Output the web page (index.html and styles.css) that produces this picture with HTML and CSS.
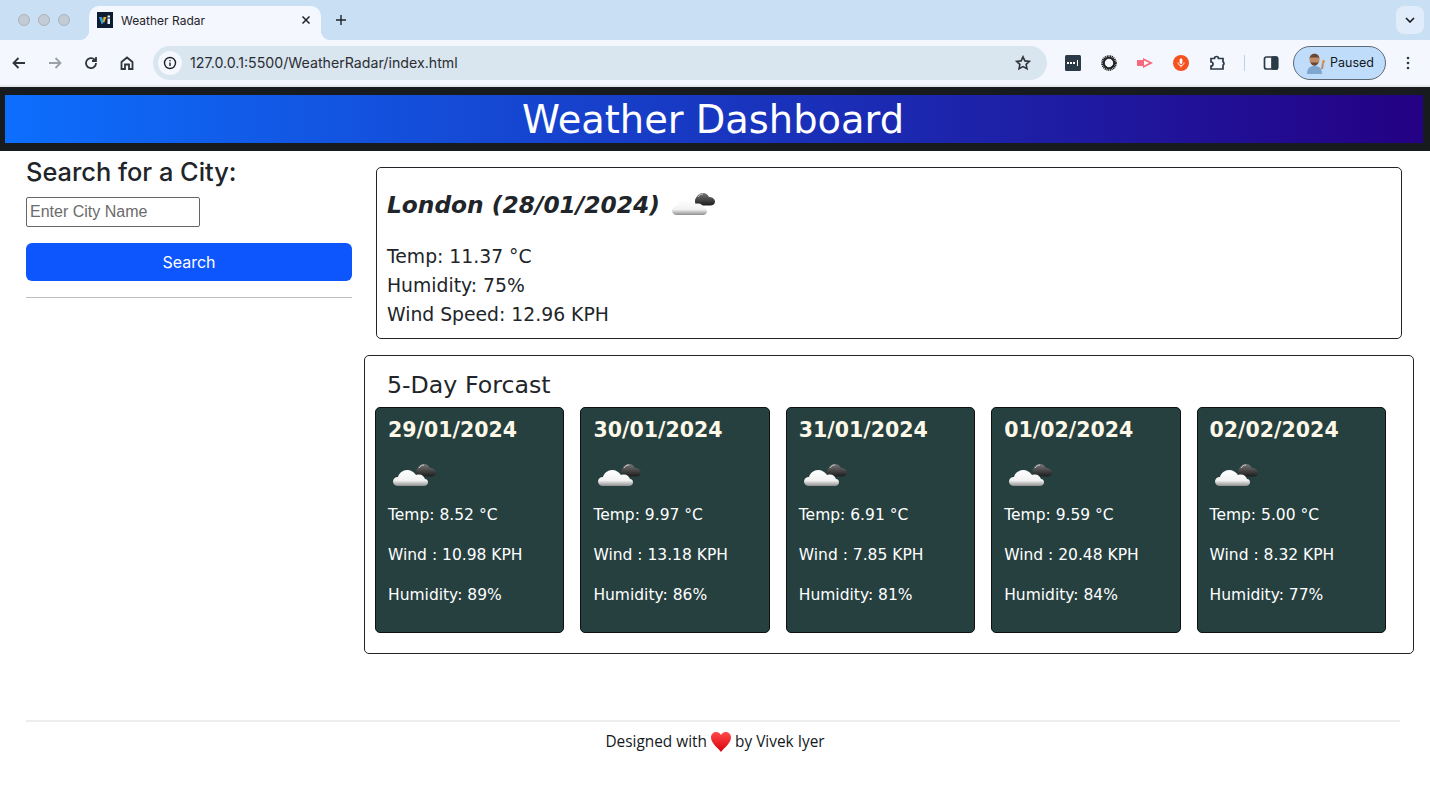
FILE: index.html
```html
<!DOCTYPE html>
<html lang="en">

<head>
    <meta charset="UTF-8">
    <meta name="viewport" content="width=device-width, initial-scale=1.0">
    <title>Weather Radar</title>
    <link rel="stylesheet" href="styles.css">
</head>

<body>
    <svg class="sprites" width="0" height="0">
        <defs>
            <linearGradient id="cloud-white" x1="0" y1="0" x2="0" y2="1">
                <stop offset="0" stop-color="#ffffff"/>
                <stop offset="0.65" stop-color="#f2f2f2"/>
                <stop offset="1" stop-color="#8f8f8f"/>
            </linearGradient>
            <linearGradient id="cloud-dark" x1="0" y1="0" x2="0" y2="1">
                <stop offset="0" stop-color="#777"/>
                <stop offset="1" stop-color="#1c1c1c"/>
            </linearGradient>
            <linearGradient id="heart-red" x1="0" y1="0" x2="0" y2="1">
                <stop offset="0" stop-color="#ff4a4a"/>
                <stop offset="1" stop-color="#d8000c"/>
            </linearGradient>
            <symbol id="clouds" viewBox="0 0 44 26">
                <path d="M24 7c1-3 4-5 7-5 3 0 5 2 6 4 3 0 6 2 6 4.500 0 2.500-2 4-5 4H27c-3 0-4-2-4-4 0-1.500 0-2.500 1-3.500z" fill="url(#cloud-dark)"/>
                <path d="M26 6c1-2 3-3 5-3" fill="none" stroke="#cfcfcf" stroke-width="1"/>
                <path d="M5 24c-3 0-5-2-5-4.500C0 17 2 15 5 15c1-4 5-7 9-7 4 0 7 2 9 5 1-.5 2-.5 3-.5 3 0 5 2 6 4.500 2 0 3 1.500 3 3.500s-2 3.500-4 3.500z" fill="url(#cloud-white)"/>
            </symbol>
        </defs>
    </svg>

    <div class="tab-strip">
        <div class="traffic">
            <span class="light"></span>
            <span class="light"></span>
            <span class="light"></span>
        </div>
        <div class="tab">
            <svg class="favicon" viewBox="0 0 16 16">
                <rect width="16" height="16" fill="#0d1b33"/>
                <path d="M2 5h3l1.500 4.500L5.500 12h-1z" fill="#2f9fe0"/>
                <path d="M9.500 5H6.500l-.5 4.500 1 1.500z" fill="#f2b01e"/>
                <rect x="10.500" y="6.500" width="2.500" height="5.500" fill="#e8eef5"/>
                <rect x="10.500" y="3.500" width="2.500" height="2" fill="#e8eef5"/>
            </svg>
            <span class="tab-title">Weather Radar</span>
            <svg class="tab-close" viewBox="0 0 10 10">
                <path d="M1.500 1.500l7 7M8.500 1.500l-7 7"/>
            </svg>
        </div>
        <svg class="new-tab" viewBox="0 0 12 12">
            <path d="M6 1v10M1 6h10"/>
        </svg>
        <div class="tab-menu">
            <svg viewBox="0 0 10 6">
                <path d="M1 1l4 4 4-4"/>
            </svg>
        </div>
    </div>

    <div class="toolbar">
        <svg class="nav-icon" viewBox="0 0 16 16"><path d="M14 8H3M7.500 3L2.500 8l5 5"/></svg>
        <svg class="nav-icon off" viewBox="0 0 16 16"><path d="M2 8h11M8.500 3l5 5-5 5"/></svg>
        <svg class="nav-icon" viewBox="0 0 16 16"><path d="M13 8a5 5 0 1 1-1.500-3.500L13 6M13 2v4H9"/></svg>
        <svg class="nav-icon" viewBox="0 0 16 16"><path d="M2.500 7L8 2.500 13.500 7v7H10V9.500H6V14H2.500z"/></svg>
        <div class="omnibox">
            <span class="site-info">
                <svg viewBox="0 0 14 14">
                    <circle cx="7" cy="7" r="5.500"/>
                    <path d="M7 6.500V10M7 4v1.200"/>
                </svg>
            </span>
            <span class="url">127.0.0.1:5500/WeatherRadar/index.html</span>
            <svg class="star" viewBox="0 0 16 16"><path d="M8 1.800l1.900 4.100 4.500.5-3.300 3 .9 4.400L8 11.600l-4 2.200.9-4.400-3.300-3 4.500-.5z"/></svg>
        </div>
        <div class="extensions">
            <svg class="ext" viewBox="0 0 16 16">
                <rect width="16" height="16" rx="1.500" fill="#2b3a47"/>
                <path d="M2 7h2v2H2zM5 7h2v2H5zM8 7h2v2H8zM12 5h1v6h-1z" fill="#fff"/>
            </svg>
            <svg class="ext" viewBox="0 0 16 16">
                <circle cx="8" cy="8" r="6" fill="none" stroke="#1c1c1c" stroke-width="3.600" stroke-dasharray="1 .5"/>
                <circle cx="8" cy="8" r="5.200" fill="none" stroke="#1c1c1c" stroke-width="1.600"/>
            </svg>
            <svg class="ext" viewBox="0 0 16 16">
                <path d="M0 5h6V3l10 5-10 5v-2H0z" fill="#f76a7d"/>
                <path d="M7 5.500L12 8l-5 2.500z" fill="#fff"/>
            </svg>
            <svg class="ext" viewBox="0 0 16 16">
                <circle cx="8" cy="8" r="8" fill="#f4511e"/>
                <rect x="6.600" y="3.500" width="2.800" height="5.500" rx="1.400" fill="#fff"/>
                <path d="M5 7.500c0 4 6 4 6 0M8 10.500v2" fill="none" stroke="#fff" stroke-width=".9"/>
            </svg>
            <svg class="ext line" viewBox="0 0 16 16">
                <path d="M2 3.500h3.500a2 2 0 0 1 4 0H14v3.300a2 2 0 0 1 0 3.400V14H2v-3a2 2 0 0 0 0-4z"/>
            </svg>
            <span class="toolbar-sep"></span>
            <svg class="ext line" viewBox="0 0 16 16">
                <rect x="1.500" y="2" width="13" height="12" rx="2"/>
                <rect x="9" y="2" width="5.500" height="12" rx="1" class="fill"/>
            </svg>
            <div class="profile">
                <svg viewBox="0 0 20 22">
                    <path d="M1 22c0-6 3-8 7.500-8s7.500 2 7.500 8z" fill="#7fa6cf"/>
                    <circle cx="8.500" cy="8" r="5" fill="#c08a66"/>
                    <path d="M3.500 7c0-7 10-7 10 0l-1-1.500h-8z" fill="#6b4630"/>
                    <path d="M4.500 10c1 5 7 5 8 0l-1 .5h-6z" fill="#6b4630"/>
                    <path d="M16 17l1-6" stroke="#c08a66" stroke-width="2"/>
                    <circle cx="17.500" cy="9.500" r="1.500" fill="#e0912f"/>
                </svg>
                <span>Paused</span>
            </div>
            <svg class="kebab" viewBox="0 0 4 16">
                <circle cx="2" cy="3" r="1.300"/>
                <circle cx="2" cy="8" r="1.300"/>
                <circle cx="2" cy="13" r="1.300"/>
            </svg>
        </div>
    </div>

    <header class="page-header">
        <h1>Weather Dashboard</h1>
    </header>

    <div class="content">
        <aside class="sidebar">
            <h2>Search for a City:</h2>
            <input class="city-input" type="text" placeholder="Enter City Name">
            <button class="search-btn" type="button">Search</button>
            <hr class="side-rule">
        </aside>

        <main class="weather">
            <section class="today">
                <h3>London (28/01/2024) <svg class="today-icon"><use href="#clouds"/></svg></h3>
                <p>Temp: 11.37 °C</p>
                <p>Humidity: 75%</p>
                <p>Wind Speed: 12.96 KPH</p>
            </section>

            <section class="forecast">
                <h4>5-Day Forcast</h4>
                <div class="cards">
                    <div class="card">
                        <h5>29/01/2024</h5>
                        <svg class="card-icon"><use href="#clouds"/></svg>
                        <p>Temp: 8.52 °C</p>
                        <p>Wind : 10.98 KPH</p>
                        <p>Humidity: 89%</p>
                    </div>
                    <div class="card">
                        <h5>30/01/2024</h5>
                        <svg class="card-icon"><use href="#clouds"/></svg>
                        <p>Temp: 9.97 °C</p>
                        <p>Wind : 13.18 KPH</p>
                        <p>Humidity: 86%</p>
                    </div>
                    <div class="card">
                        <h5>31/01/2024</h5>
                        <svg class="card-icon"><use href="#clouds"/></svg>
                        <p>Temp: 6.91 °C</p>
                        <p>Wind : 7.85 KPH</p>
                        <p>Humidity: 81%</p>
                    </div>
                    <div class="card">
                        <h5>01/02/2024</h5>
                        <svg class="card-icon"><use href="#clouds"/></svg>
                        <p>Temp: 9.59 °C</p>
                        <p>Wind : 20.48 KPH</p>
                        <p>Humidity: 84%</p>
                    </div>
                    <div class="card">
                        <h5>02/02/2024</h5>
                        <svg class="card-icon"><use href="#clouds"/></svg>
                        <p>Temp: 5.00 °C</p>
                        <p>Wind : 8.32 KPH</p>
                        <p>Humidity: 77%</p>
                    </div>
                </div>
            </section>
        </main>
    </div>

    <footer class="page-footer">
        <hr class="foot-rule">
        <p>Designed with <svg class="heart" viewBox="0 0 20 20"><path d="M10 20C6.500 15.500 0 11 0 5.500 0 2 2.500 0 5.300 0 7.300 0 9 1 10 3c1-2 2.700-3 4.700-3C17.500 0 20 2 20 5.500c0 5.500-6.500 10-10 14.500z" fill="url(#heart-red)"/></svg> by Vivek Iyer</p>
    </footer>
</body>

</html>
```

FILE: styles.css
```css
* {
    box-sizing: border-box;
}

body {
    margin: 0;
    font-family: "DejaVu Sans", sans-serif;
    color: #212529;
    background-color: #fff;
    height: 786px;
    overflow: hidden;
}

.sprites {
    display: block;
    height: 0;
}

/* browser chrome */
.tab-strip {
    display: flex;
    align-items: flex-end;
    height: 40px;
    background-color: #c9dff3;
    padding-left: 18px;
}

.traffic {
    display: flex;
    gap: 8px;
    align-self: center;
    margin-right: 19px;
}

.light {
    width: 12px;
    height: 12px;
    border-radius: 50%;
    background-color: #c3ccd5;
    border: 1px solid #a9b3bc;
}

.tab {
    position: relative;
    display: flex;
    align-items: center;
    width: 232px;
    height: 34px;
    padding: 0 10px 6px 8px;
    background-color: #f4f7fe;
    border-radius: 10px 10px 0 0;
}

.tab::before,
.tab::after {
    content: "";
    position: absolute;
    bottom: 0;
    width: 10px;
    height: 10px;
}

.tab::before {
    left: -10px;
    background: radial-gradient(circle at 0 0, #c9dff3 10px, #f4f7fe 10.500px);
}

.tab::after {
    right: -10px;
    background: radial-gradient(circle at 100% 0, #c9dff3 10px, #f4f7fe 10.500px);
}

.favicon {
    width: 16px;
    height: 16px;
    margin-right: 8px;
}

.tab-title {
    flex: 1;
    font: 12px "Inter", sans-serif;
    color: #1f2328;
}

.tab-close {
    width: 10px;
    height: 10px;
    fill: none;
    stroke: #1f2328;
    stroke-width: 1.500;
}

.new-tab {
    width: 12px;
    height: 12px;
    margin: 0 0 14px 14px;
    fill: none;
    stroke: #1f2328;
    stroke-width: 1.400;
}

.tab-menu {
    display: flex;
    align-items: center;
    justify-content: center;
    width: 28px;
    height: 28px;
    margin: 0 6px 6px auto;
    border-radius: 8px;
    background-color: #e0ecfa;
}

.tab-menu svg {
    width: 10px;
    height: 6px;
    fill: none;
    stroke: #14181c;
    stroke-width: 1.600;
}

.toolbar {
    display: flex;
    align-items: center;
    height: 47px;
    padding: 0 12px 0 11px;
    background-color: #f4f7fe;
    border-bottom: 2px solid #e6e9ee;
}

.nav-icon {
    width: 16px;
    height: 16px;
    margin-right: 20px;
    fill: none;
    stroke: #2f353b;
    stroke-width: 1.800;
}

.nav-icon.off {
    stroke: #9aa0a6;
}

.nav-icon:nth-of-type(4) {
    margin-right: 18px;
}

.omnibox {
    display: flex;
    align-items: center;
    width: 894px;
    height: 34px;
    padding: 0 16px 0 5px;
    border-radius: 17px;
    background-color: #d9e5ef;
}

.site-info {
    display: flex;
    align-items: center;
    justify-content: center;
    width: 24px;
    height: 24px;
    margin-right: 8px;
    border-radius: 50%;
    background-color: #f4f7fe;
}

.site-info svg {
    width: 14px;
    height: 14px;
    fill: none;
    stroke: #1f2328;
    stroke-width: 1.400;
}

.url {
    flex: 1;
    font: 14.200px "Inter", sans-serif;
    color: #2a2e33;
}

.star {
    width: 16px;
    height: 16px;
    fill: none;
    stroke: #2f353b;
    stroke-width: 1.600;
}

.extensions {
    display: flex;
    align-items: center;
    margin-left: 18px;
}

.ext {
    width: 16px;
    height: 16px;
    margin-right: 20px;
}

.line {
    fill: none;
    stroke: #2b3a47;
    stroke-width: 1.700;
}

.line .fill {
    fill: #2b3a47;
}

.toolbar-sep {
    width: 1px;
    height: 16px;
    margin: 0 18px 0 -1px;
    background-color: #b5d3ee;
}

.profile {
    display: flex;
    align-items: center;
    gap: 4px;
    width: 93px;
    height: 34px;
    margin-left: -6px;
    padding-left: 12px;
    border: 1px solid #5f6b76;
    border-radius: 17px;
    background-color: #bfdcfb;
    font: 12.500px "Inter", sans-serif;
    color: #14181c;
}

.profile svg {
    width: 20px;
    height: 22px;
}

.kebab {
    width: 4px;
    height: 16px;
    margin-left: 20px;
    fill: #2b3a47;
}

/* page */
.page-header {
    background-color: #181b1e;
    padding: 8px 7px 8px 5px;
}

.page-header h1 {
    margin: 0;
    height: 48px;
    padding-right: 2px;
    line-height: 50px;
    text-align: center;
    font-size: 38.400px;
    font-weight: 400;
    color: #fff;
    background: linear-gradient(to right, #0d6efd, #240084);
}

.content {
    display: flex;
}

.sidebar {
    display: flex;
    flex-direction: column;
    align-items: flex-start;
    width: 326px;
    margin-left: 26px;
    padding-top: 6px;
}

.sidebar h2 {
    margin: 0 0 10px;
    font: 500 25.400px/30px "Inter", sans-serif;
    color: #212529;
}

.city-input {
    width: 174px;
    height: 30px;
    padding: 0 3px;
    border: 1px solid #666;
    border-radius: 2px;
    font: 16px "Liberation Sans", sans-serif;
}

.city-input::placeholder {
    color: #6b6b6b;
}

.search-btn {
    width: 100%;
    height: 38px;
    margin-top: 16px;
    border: none;
    border-radius: 6px;
    background-color: #0d56fd;
    color: #fff;
    font: 16px "Inter", sans-serif;
}

.side-rule {
    width: 100%;
    margin: 16px 0 0;
    border: none;
    border-top: 1px solid #bdbdbd;
}

.weather {
    margin-left: 12px;
    width: 1050px;
}

.today {
    width: 1026px;
    height: 172px;
    margin: 16px 0 16px 12px;
    padding: 10px;
    border: 1px solid #212529;
    border-radius: 5px;
    font-size: 18.800px;
}

.today h3 {
    display: flex;
    align-items: center;
    gap: 12px;
    margin: 0 0 12px;
    height: 52px;
    font-size: 23.300px;
    font-style: italic;
    font-weight: 700;
}

.today-icon {
    width: 44px;
    height: 26px;
}

.today p {
    margin: 0;
    line-height: 29px;
}

.forecast {
    height: 299px;
    padding: 0 10px;
    border: 1px solid #212529;
    border-radius: 5px;
}

.forecast h4 {
    margin: 0;
    padding: 15px 0 0 12px;
    height: 51px;
    font-size: 23.700px;
    font-weight: 400;
}

.cards {
    display: flex;
    gap: 16px;
}

.card {
    width: 189.400px;
    height: 226px;
    padding: 10px 12px;
    border: 1px solid #111;
    border-radius: 5px;
    background-color: #264040;
    color: #fff;
    font-size: 15.500px;
}

.card h5 {
    margin: 0 0 20px;
    font-size: 20.500px;
    line-height: 24px;
    color: #fdf8e8;
}

.card-icon {
    display: block;
    width: 44px;
    height: 26px;
    margin: 0 0 15px 5px;
}

.card p {
    margin: 0 0 16px;
    line-height: 24px;
}

.page-footer {
    margin-top: 66px;
    text-align: center;
}

.foot-rule {
    width: 1374px;
    margin: 0 0 0 26px;
    border: none;
    border-top: 2px solid #eeeeee;
}

.page-footer p {
    display: flex;
    align-items: center;
    justify-content: center;
    gap: 4px;
    margin: 9px 0 0;
    font: 15.400px "Open Sans", sans-serif;
    color: #14181c;
}

.heart {
    width: 20px;
    height: 20px;
}
```
